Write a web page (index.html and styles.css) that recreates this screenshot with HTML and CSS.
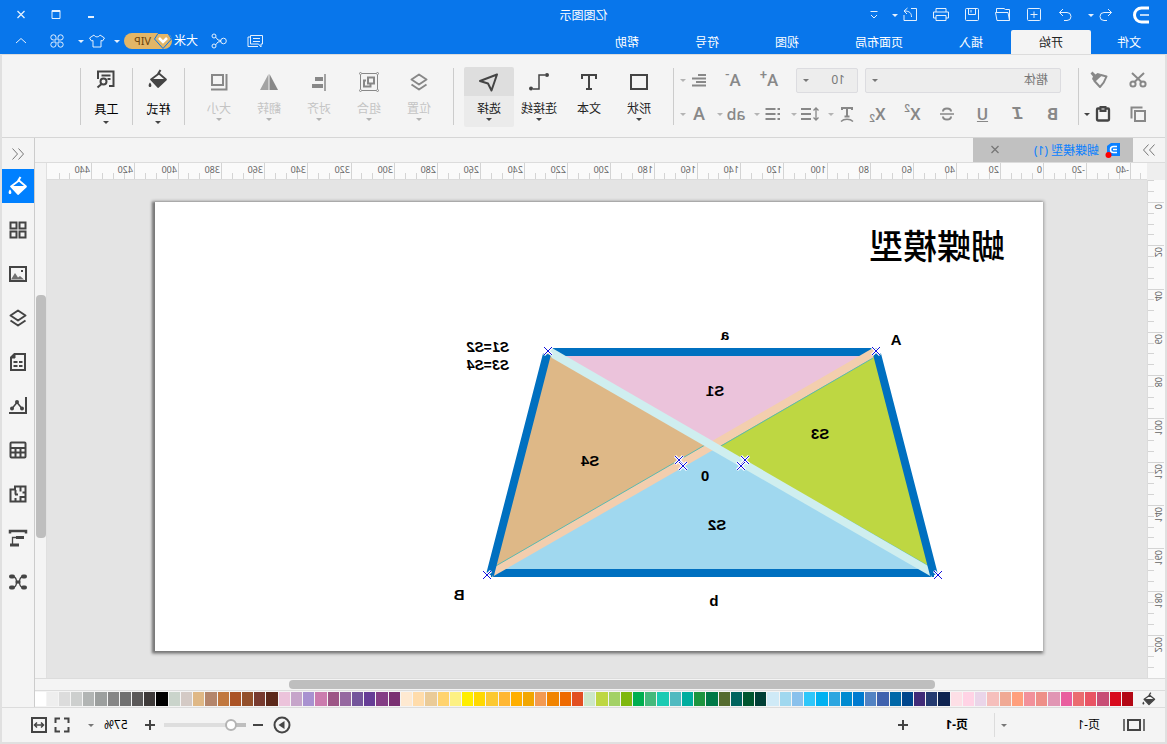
FILE: index.html
```html
<!DOCTYPE html>
<html lang="zh-CN">
<head>
<meta charset="utf-8">
<title>亿图图示</title>
<link rel="stylesheet" href="styles.css">
</head>
<body>
<svg class="sprite" aria-hidden="true">
  <symbol id="logo" viewBox="0 0 20 20"><path d="M2 3h7.500a7 7 0 0 1 0 14H2" fill="none" stroke="currentColor" stroke-width="3"/><path d="M2 10h9" fill="none" stroke="#b8d8fa" stroke-width="2"/></symbol>
  <symbol id="undo" viewBox="0 0 20 20"><path d="M8 4L4.500 7.500 8 11M4.500 7.500H12a3.700 3.700 0 0 1 0 8H9"/></symbol>
  <symbol id="redo" viewBox="0 0 20 20"><path d="M12 4l3.500 3.500L12 11M15.500 7.500H8a3.700 3.700 0 0 0 0 8h3"/></symbol>
  <symbol id="new" viewBox="0 0 20 20"><rect x="3.500" y="3.500" width="13" height="12" rx="1"/><path d="M10 6.500v6.500M6.500 9.500h7"/></symbol>
  <symbol id="open" viewBox="0 0 20 20"><path d="M3.500 15.500v-11h4l1.500-1h7.500v4M3.500 15.500l1.500-8h12.500l-1.500 8z"/></symbol>
  <symbol id="save" viewBox="0 0 20 20"><rect x="3.500" y="3.500" width="13" height="12" rx="1"/><path d="M6.500 3.500v6h7v-6M11 5v2.500"/></symbol>
  <symbol id="print" viewBox="0 0 20 20"><path d="M5 7V3.500h10V7M5 13H2.500V7h15v6H15M5 10.500h10v5H5z"/></symbol>
  <symbol id="export" viewBox="0 0 20 20"><path d="M9 3.500H3.500v12h12.500V10M8.500 12c0-4 2-6 7-6M12.500 3L16 6l-3 3"/></symbol>
  <symbol id="more" viewBox="0 0 20 20"><path d="M6.500 6.500h7M7 10l3 3 3-3"/></symbol>
  <symbol id="min" viewBox="0 0 20 20"><path d="M7 12h6" stroke-width="2"/></symbol>
  <symbol id="max" viewBox="0 0 20 20"><path d="M6 5.500h8v8H6zM6 6.500h8"/></symbol>
  <symbol id="close" viewBox="0 0 20 20"><path d="M6.500 6l7 7M13.500 6l-7 7" stroke-width="1.300"/></symbol>
  <symbol id="note" viewBox="0 0 20 20"><path d="M2.500 4.500h12v8.500h-8l-2.500 3V13h-1.500zM5 7.500h7M5 10.500h7M15 6h2v9.500H7"/></symbol>
  <symbol id="share" viewBox="0 0 20 20"><circle cx="5.500" cy="10" r="2.800"/><circle cx="15" cy="5" r="2"/><circle cx="15" cy="15" r="2"/><path d="M8 9.500l3-.5 2.500-3M8 10.500l3 .5 2.500 3"/></symbol>
  <symbol id="shirt" viewBox="0 0 20 20"><path d="M7 4L2.500 7l2 3L6 9.500V16h8V9.500l1.500.5 2-3L13 4c-1 2.500-5 2.500-6 0z"/></symbol>
  <symbol id="clover" viewBox="0 0 20 20"><path d="M9 9H6.500A2.600 2.600 0 1 1 9 6.500zM11 9h2.500A2.600 2.600 0 1 0 11 6.500zM9 11H6.500A2.600 2.600 0 1 0 9 13.500zM11 11h2.500A2.600 2.600 0 1 1 11 13.500z"/></symbol>
  <symbol id="up" viewBox="0 0 20 20"><path d="M5 12l5-4.500 5 4.500"/></symbol>
  <symbol id="left2" viewBox="0 0 20 20"><path d="M9.500 4.500L4.500 10l5 5.500M15.500 4.500L10.500 10l5 5.500"/></symbol>
  <symbol id="right2" viewBox="0 0 20 20"><path d="M4.500 4.500L9.500 10l-5 5.500M10.500 4.500L15.500 10l-5 5.500"/></symbol>
  <symbol id="cut" viewBox="0 0 20 20"><g stroke-width="2"><circle cx="5" cy="14" r="2.600"/><circle cx="15" cy="14" r="2.600"/><path d="M4 3l9.500 9M16 3l-9.500 9"/></g></symbol>
  <symbol id="painter" viewBox="0 0 20 20"><path d="M2.500 6.500L8 5l6.500 6L9 17c-2.500-2.500-5-6-6.500-10.500z" stroke-width="2" stroke-linejoin="round"/><path d="M8 4l3.500-1 2 1.500L16.500 1.500l2 2-2.500 3 1 2.500-2.500 3z" fill="currentColor" stroke="none"/></symbol>
  <symbol id="copy" viewBox="0 0 20 20"><path d="M3 7h10v10H3zM5.500 3.500h11v11" stroke-width="2"/></symbol>
  <symbol id="paste" viewBox="0 0 20 20"><rect x="4" y="4.500" width="12" height="12" rx="1" stroke-width="2.300"/><path d="M6.500 2h7v6h-7z" fill="currentColor" stroke="none"/><path d="M8.500 5h3" stroke="#f4f4f4"/></symbol>
  <symbol id="alignc" viewBox="0 0 20 20"><path d="M3 5h8M3 8.500h14M3 12h10M3 15.500h14" stroke-width="2"/></symbol>
  <symbol id="strike" viewBox="0 0 20 20"><path d="M14 7.500c0-4-8-4-8 0M6 12.500c0 4 8 4 8 0" stroke-width="2"/><path d="M3 10h14" stroke-width="1.500"/></symbol>
  <symbol id="textarc" viewBox="0 0 20 20"><path d="M5 6V4h10v2M10 4v9M7.500 12.500h5" stroke-width="2"/><path d="M4 17.500c3-3 9-3 12 0" stroke-width="1.500"/></symbol>
  <symbol id="lineh" viewBox="0 0 20 20"><path d="M4 4.500v11M1.500 6.500L4 4l2.500 2.500M1.500 13.500L4 16l2.500-2.500" stroke-width="1.300"/><path d="M9 5h10M9 10h10M9 15h10" stroke-width="2"/></symbol>
  <symbol id="list" viewBox="0 0 20 20"><path d="M3 5h2.500M7.500 5h10M3 10h2.500M7.500 10h10M3 15h2.500M7.500 15h10" stroke-width="2"/></symbol>
  <symbol id="shape" viewBox="0 0 20 20"><path d="M2 3h16v14H2z" stroke-width="2"/></symbol>
  <symbol id="text" viewBox="0 0 20 20"><path d="M3 7V3h14v4M10 3v14.500M7 17h6" stroke-width="2"/></symbol>
  <symbol id="conn" viewBox="0 0 20 20"><path d="M4 3h6v14h6" stroke-width="1.500"/><circle cx="2" cy="3" r="2" fill="currentColor" stroke="none"/><circle cx="18" cy="16.500" r="2" fill="currentColor" stroke="none"/></symbol>
  <symbol id="select" viewBox="0 0 20 20"><path d="M2 2.500l17 6.500-8 2.500-3.500 7z" stroke-width="2" stroke-linejoin="round"/></symbol>
  <symbol id="layers" viewBox="0 0 20 20"><path d="M10 2.500l7.500 5L10 12.500 2.500 7.500zM2.500 12.500L10 17.500l7.500-5" stroke-width="2" stroke-linejoin="round"/></symbol>
  <symbol id="group" viewBox="0 0 20 20"><path d="M1.500 1.500h17v17h-17z"/><path d="M5 5.500h6v6H5zM13 8.500h2v6H8.500v-2" stroke-width="2"/><path d="M0 0h3v3H0zM17 0h3v3h-3zM0 17h3v3H0zM17 17h3v3h-3z" fill="#f4f4f4" stroke="none"/><circle cx="1.500" cy="1.500" r="1"/><circle cx="18.500" cy="1.500" r="1"/><circle cx="1.500" cy="18.500" r="1"/><circle cx="18.500" cy="18.500" r="1"/></symbol>
  <symbol id="align" viewBox="0 0 20 20"><path d="M4 2v17" stroke-width="1.500"/><path d="M6 5h8v4H6zM6 12h11v4H6z" fill="currentColor" stroke="none"/></symbol>
  <symbol id="flip" viewBox="0 0 20 20"><path d="M9.500 2v16H1z" fill="currentColor" stroke="none"/><path d="M10.500 2v16H19z" fill="currentColor" stroke="none" opacity=".75"/></symbol>
  <symbol id="size" viewBox="0 0 20 20"><path d="M6 3h11v10H6zM2.500 2v15.500H18" stroke-width="2"/></symbol>
  <symbol id="bucket" viewBox="0 0 20 20"><path d="M9 4.500l8 6L10 18 2 10.500z" stroke-width="1.800" stroke-linejoin="round"/><path d="M2 10h15L10 18z" fill="currentColor" stroke="none"/><path d="M10 5L7.500 1" stroke-width="2"/><path d="M18 13.500c2.500 3 1 4.500 0 4.500s-2.500-1.500 0-4.500z" fill="currentColor" stroke="none"/></symbol>
  <symbol id="tools" viewBox="0 0 20 20"><path d="M7 17H2.500V2.500H18V10" stroke-width="2"/><path d="M5.500 6.500h9M5.500 10h3" stroke-width="1.800"/><circle cx="12.500" cy="12.500" r="3" stroke-width="2"/><path d="M14.500 15l4 3.500" stroke-width="2"/></symbol>
  <symbol id="grid" viewBox="0 0 20 20"><path d="M2.500 2.500h6v6h-6zM2.500 11.500h6v6h-6zM11.500 11.500h6v6h-6zM11.500 2.500h6v6h-6z" stroke-width="2"/></symbol>
  <symbol id="image" viewBox="0 0 20 20"><path d="M2 3h16v14H2z" stroke-width="2"/><path d="M4 15.500l4-3.500 2 1.500 3-4.500 4 6.500z" fill="currentColor" stroke="none" opacity=".75"/><path d="M5 6h2v2H5z" fill="currentColor" stroke="none"/></symbol>
  <symbol id="doc" viewBox="0 0 20 20"><path d="M3 2h10.500L17 5.500V18H3z" stroke-width="2"/><path d="M5.500 10H9M10.500 10h4M5.500 14H9M10.500 14h4" stroke-width="2"/><path d="M13 2v4h4z" fill="currentColor"/></symbol>
  <symbol id="chart" viewBox="0 0 20 20"><path d="M2 1v16h17" stroke-width="2"/><path d="M6 12.500l5-6 5 6" stroke-width="1.500"/><circle cx="6" cy="12.500" r="2" fill="currentColor" stroke="none"/><circle cx="11" cy="6" r="2" fill="currentColor" stroke="none"/><circle cx="16" cy="12.500" r="2" fill="currentColor" stroke="none"/></symbol>
  <symbol id="table" viewBox="0 0 20 20"><rect x="2.500" y="2.500" width="15" height="15" rx="1" stroke-width="2"/><path d="M2 8h16M2 12.500h16M7.500 8v10M12.500 8v10" stroke-width="2"/></symbol>
  <symbol id="plan" viewBox="0 0 20 20"><path d="M2.500 2.500H13v3h4.500v12h-15zM7.500 2.500v5M2.500 8.500h3M2.500 13h5v4.500M12.500 6v4.500M12.500 17v-3M10 10.500h3" stroke-width="2"/></symbol>
  <symbol id="gantt" viewBox="0 0 20 20"><path d="M2 5.500V3h16v2.500" stroke-width="2.500"/><path d="M4 9.500h8M9 17h9" stroke-width="3"/><path d="M12 9.500h3.500V16" stroke-width="1.300"/></symbol>
  <symbol id="mind" viewBox="0 0 20 20"><path d="M4 4.500c6 0 3 5.500 6 5.500s0-5.500 6-5.500M4 15.500c6 0 3-5.500 6-5.500s0 5.500 6 5.500" stroke-width="1.300"/><path d="M3 4.500h2M15 4.500h2M3 15.500h2M15 15.500h2" stroke-width="4" stroke-linecap="round"/><path d="M7.500 10h5" stroke-width="3"/></symbol>
  <symbol id="pageview" viewBox="0 0 24 20"><path d="M6 5h12v10H6z" stroke-width="2"/><path d="M2 4v12M22 4v12" stroke-width="1.500"/></symbol>
  <symbol id="plus" viewBox="0 0 20 20"><path d="M10 5v10M5 10h10" stroke-width="2"/></symbol>
  <symbol id="minus" viewBox="0 0 20 20"><path d="M5 10h10" stroke-width="2"/></symbol>
  <symbol id="play" viewBox="0 0 20 20"><circle cx="10" cy="10" r="7.500" stroke-width="2"/><path d="M7.500 6l6 4-6 4z" fill="currentColor" stroke="none"/></symbol>
  <symbol id="full" viewBox="0 0 20 20"><path d="M3.500 8V3.500H8M12 3.500h4.500V8M16.500 12v4.500H12M8 16.500H3.500V12" stroke-width="2"/></symbol>
  <symbol id="fit" viewBox="0 0 20 20"><path d="M3 3h14v14H3z" stroke-width="2"/><path d="M6 10h8M8 7.500L5.500 10 8 12.500M12 7.500l2.500 2.500L12 12.500" stroke-width="1.500"/></symbol>
</svg>

<div class="app">
  <header class="titlebar">
    <div class="title-row">
      <nav class="quick">
        <svg class="icon brand"><use href="#logo"/></svg>
        <button class="q" aria-label="撤销"><svg class="icon"><use href="#undo"/></svg><i class="caret"></i></button>
        <button class="q" aria-label="重做"><svg class="icon"><use href="#redo"/></svg></button>
        <button class="q" aria-label="新建"><svg class="icon"><use href="#new"/></svg></button>
        <button class="q" aria-label="打开"><svg class="icon"><use href="#open"/></svg></button>
        <button class="q" aria-label="保存"><svg class="icon"><use href="#save"/></svg></button>
        <button class="q" aria-label="打印"><svg class="icon"><use href="#print"/></svg></button>
        <button class="q export" aria-label="导出"><svg class="icon"><use href="#export"/></svg><i class="caret"></i></button>
        <button class="q" aria-label="更多"><svg class="icon"><use href="#more"/></svg></button>
      </nav>
      <h1 class="app-title">亿图图示</h1>
      <div class="window-buttons">
        <button aria-label="最小化"><svg class="icon"><use href="#min"/></svg></button>
        <button aria-label="最大化"><svg class="icon"><use href="#max"/></svg></button>
        <button aria-label="关闭"><svg class="icon"><use href="#close"/></svg></button>
      </div>
    </div>
    <div class="menu-row">
      <nav class="menu">
        <button class="menu-tab first">文件</button>
        <button class="menu-tab active">开始</button>
        <button class="menu-tab">插入</button>
        <button class="menu-tab">页面布局</button>
        <button class="menu-tab">视图</button>
        <button class="menu-tab">符号</button>
        <button class="menu-tab">帮助</button>
      </nav>
      <div class="account">
        <button class="acc note" aria-label="评论"><svg class="icon"><use href="#note"/></svg></button>
        <button class="acc share" aria-label="分享"><svg class="icon"><use href="#share"/></svg></button>
        <span class="user">大米</span>
        <button class="vip"><svg class="gem" viewBox="0 0 18 16"><path d="M4 .5h10l3.500 5.500L9 15.500.5 6z" fill="#e3b667" stroke="#0876eb"/><path d="M5 5l4 4 4-4" fill="none" stroke="#fff" stroke-width="2.500"/></svg>VIP</button>
        <i class="caret"></i>
        <button class="acc skin" aria-label="皮肤"><svg class="icon"><use href="#shirt"/></svg></button>
        <i class="caret"></i>
        <button class="acc" aria-label="应用"><svg class="icon"><use href="#clover"/></svg></button>
        <button class="acc" aria-label="收起"><svg class="icon"><use href="#up"/></svg></button>
      </div>
    </div>
  </header>

  <div class="frame">
    <section class="ribbon">
      <div class="clip">
        <button aria-label="剪切"><svg class="icon"><use href="#cut"/></svg></button>
        <button aria-label="格式刷"><svg class="icon"><use href="#painter"/></svg></button>
        <button aria-label="复制"><svg class="icon"><use href="#copy"/></svg></button>
        <button class="dark" aria-label="粘贴"><svg class="icon"><use href="#paste"/></svg><i class="caret"></i></button>
      </div>
      <span class="rule"></span>
      <div class="font">
        <div class="font-row fields">
          <label class="combo family"><select aria-label="字体"><option>楷体</option></select><i class="caret"></i></label>
          <label class="combo points"><select aria-label="字号"><option>10</option></select><i class="caret"></i></label>
          <button class="f big" aria-label="增大字号">A<sup>+</sup></button>
          <button class="f big" aria-label="减小字号">A<sup>-</sup></button>
          <button class="split" aria-label="对齐方式"><svg class="icon"><use href="#alignc"/></svg><i class="caret"></i></button>
        </div>
        <div class="font-row">
          <button class="f"><b>B</b></button>
          <button class="f italic">I</button>
          <button class="f"><u>U</u></button>
          <button class="f" aria-label="删除线"><svg class="icon"><use href="#strike"/></svg></button>
          <button class="f">X<sup>2</sup></button>
          <button class="f">X<sub>2</sub></button>
          <button class="split" aria-label="文字效果"><svg class="icon"><use href="#textarc"/></svg><i class="caret"></i></button>
          <button class="split" aria-label="行距"><svg class="icon"><use href="#lineh"/></svg><i class="caret"></i></button>
          <button class="split" aria-label="列表"><svg class="icon"><use href="#list"/></svg><i class="caret"></i></button>
          <button class="split"><span>ab</span><i class="caret"></i></button>
          <button class="split letter"><span>A</span><i class="caret"></i></button>
        </div>
      </div>
      <span class="rule"></span>
      <div class="commands">
        <button class="cmd"><svg class="icon"><use href="#shape"/></svg><span>形状</span><i class="caret"></i></button>
        <button class="cmd"><svg class="icon"><use href="#text"/></svg><span>文本</span></button>
        <button class="cmd"><svg class="icon"><use href="#conn"/></svg><span>连接线</span><i class="caret"></i></button>
        <button class="cmd on"><svg class="icon"><use href="#select"/></svg><span>选择</span><i class="caret"></i></button>
      </div>
      <span class="rule"></span>
      <div class="commands arrange">
        <button class="cmd" disabled><svg class="icon"><use href="#layers"/></svg><span>位置</span><i class="caret"></i></button>
        <button class="cmd" disabled><svg class="icon"><use href="#group"/></svg><span>组合</span><i class="caret"></i></button>
        <button class="cmd" disabled><svg class="icon"><use href="#align"/></svg><span>对齐</span><i class="caret"></i></button>
        <button class="cmd" disabled><svg class="icon"><use href="#flip"/></svg><span>翻转</span><i class="caret"></i></button>
        <button class="cmd" disabled><svg class="icon"><use href="#size"/></svg><span>大小</span><i class="caret"></i></button>
      </div>
      <span class="rule"></span>
      <button class="cmd tool"><svg class="icon"><use href="#bucket"/></svg><span>样式</span><i class="caret"></i></button>
      <span class="rule"></span>
      <button class="cmd tool"><svg class="icon"><use href="#tools"/></svg><span>工具</span><i class="caret"></i></button>
      <span class="rule"></span>
    </section>

    <div class="middle">
      <div class="workspace">
        <div class="doc-tabs">
          <button class="collapse" aria-label="展开"><svg class="icon"><use href="#right2"/></svg></button>
          <div class="doc-tab">
            <svg class="file-icon" viewBox="0 0 16 16"><path d="M1 1h9l4 3v10H1z" fill="#0a80ff"/><path d="M4 4.500h3.500a3 3 0 0 1 0 6H4M4 7.500h4" fill="none" stroke="#fff" stroke-width="1.500"/><circle cx="12.500" cy="13" r="3" fill="#f00"/></svg>
            <span class="doc-name">蝴蝶模型 (1)</span>
            <button class="doc-close" aria-label="关闭标签"><svg class="icon"><use href="#close"/></svg></button>
          </div>
        </div>
        <div class="board">
          <div class="corner"></div>
          <svg class="ruler ruler-h" id="ruler-h"></svg>
          <div class="v-scroll"><span class="v-thumb"></span></div>
          <svg class="ruler ruler-v" id="ruler-v"></svg>
          <main class="canvas">
            <svg class="page" viewBox="0 0 888 449">
              <text x="38" y="57" class="heading">蝴蝶模型</text>
              <path d="M166 150H496L331 243z" fill="#ebc3db"/>
              <path d="M166 150L331 243 107 371z" fill="#bed742"/>
              <path d="M496 150L331 243 554 371z" fill="#deb887"/>
              <path d="M331 243L554 371H107z" fill="#a0d8ef"/>
              <path d="M166 150H493M109 371H552" class="edge"/>
              <path d="M165 147L170 146 549 365 551 375 170 156z" fill="#f3ceae"/>
              <path d="M170 156L322 244M338 243L549 365M200 315L113 365" class="hair"/>
              <path d="M497 147L491 146 113 365 111 375 491 156z" fill="#cfeeef"/>
              <path d="M166 152L109 373M496 152L553 373" class="edge"/>
              <g id="marks"></g>
              <g class="labels">
                <text x="147" y="143">A</text><text x="318" y="138">a</text>
                <text x="328" y="194">S1</text><text x="223" y="237">S3</text>
                <text x="453" y="264">S4</text><text x="338" y="279">0</text>
                <text x="326" y="328">S2</text><text x="584" y="398">B</text>
                <text x="329" y="404">b</text>
                <text x="555" y="150" class="eq">S1=S2</text><text x="555" y="168" class="eq">S3=S4</text>
              </g>
            </svg>
          </main>
          <div class="v-scroll"></div>
        </div>
        <div class="h-scroll"><span class="h-thumb"></span></div>
        <div class="palette">
          <svg class="icon fill"><use href="#bucket"/></svg>
          <div class="swatches" id="swatches"></div>
        </div>
      </div>
      <aside class="sidebar">
        <button class="side-head" aria-label="收起"><svg class="icon"><use href="#left2"/></svg></button>
        <button class="side active" aria-label="填充"><svg class="icon"><use href="#bucket"/></svg></button>
        <button class="side" aria-label="布局"><svg class="icon"><use href="#grid"/></svg></button>
        <button class="side" aria-label="图片"><svg class="icon"><use href="#image"/></svg></button>
        <button class="side" aria-label="图层"><svg class="icon"><use href="#layers"/></svg></button>
        <button class="side" aria-label="备注"><svg class="icon"><use href="#doc"/></svg></button>
        <button class="side" aria-label="图表"><svg class="icon"><use href="#chart"/></svg></button>
        <button class="side" aria-label="表格"><svg class="icon"><use href="#table"/></svg></button>
        <button class="side" aria-label="平面图"><svg class="icon"><use href="#plan"/></svg></button>
        <button class="side" aria-label="甘特图"><svg class="icon"><use href="#gantt"/></svg></button>
        <button class="side" aria-label="思维导图"><svg class="icon"><use href="#mind"/></svg></button>
      </aside>
    </div>

    <footer class="status">
      <svg class="icon wide"><use href="#pageview"/></svg>
      <button class="page-pick"><span>页-1</span><i class="caret"></i></button>
      <span class="bar"></span>
      <button class="page-tab">页-1</button>
      <button class="add" aria-label="新建页"><svg class="icon"><use href="#plus"/></svg></button>
      <div class="zoom">
        <button aria-label="演示"><svg class="icon"><use href="#play"/></svg></button>
        <button class="step" aria-label="缩小"><svg class="icon"><use href="#minus"/></svg></button>
        <input type="range" class="slider" aria-label="缩放" min="0" max="100" value="12">
        <button class="step" aria-label="放大"><svg class="icon"><use href="#plus"/></svg></button>
        <button class="percent"><span>57%</span><i class="caret"></i></button>
        <button class="view" aria-label="全屏"><svg class="icon"><use href="#full"/></svg></button>
        <button class="view" aria-label="适应宽度"><svg class="icon"><use href="#fit"/></svg></button>
      </div>
    </footer>
  </div>
</div>
<script src="script.js"></script>
</body>
</html>
```
FILE: styles.css
```css
* { box-sizing: border-box; }
body {
  margin: 0;
  overflow: hidden;
  font: 12px/16px "Noto Sans", "Noto Sans CJK SC", sans-serif;
  color: #222;
}
button {
  margin: 0;
  padding: 0;
  border: 0;
  background: none;
  font: inherit;
  color: inherit;
  display: flex;
  align-items: center;
  justify-content: center;
}
.sprite { display: none; }
.icon {
  width: 20px;
  height: 20px;
  flex: none;
  fill: none;
  stroke: currentColor;
}
.caret {
  flex: none;
  border: 3px solid transparent;
  border-top-color: currentColor;
  border-bottom: 0;
}

/* The whole window is shown as seen in a mirror. */
.app {
  height: 100vh;
  display: flex;
  flex-direction: column;
  transform: scaleX(-1);
}

/* Title bar */
.titlebar { background: #0876eb; color: #e4f0fd; }
.title-row {
  height: 30px;
  display: grid;
  grid-template-columns: 1fr auto 1fr;
  align-items: center;
}
.quick { display: flex; align-items: center; padding-left: 16px; }
.brand { color: #fff; margin-right: 15px; }
.q { margin-right: 11px; }
.q .caret { margin: 0 2px; }
.q.export { margin-right: 6px; }
.app-title { margin: 0; padding-top: 2px; font-size: 12px; font-weight: 400; color: #fff; }
.window-buttons {
  display: flex;
  justify-content: flex-end;
  gap: 15px;
  padding-right: 11px;
}
.menu-row { display: flex; justify-content: space-between; }
.menu { display: flex; }
.menu-tab { height: 24px; padding: 2px 28px 0; color: #fff; }
.menu-tab.first { padding: 2px 26px 0; }
.menu-tab.active {
  background: #f4f4f4;
  color: #222;
  border-radius: 2px 2px 0 0;
}
.account {
  display: flex;
  align-items: center;
  height: 22px;
  padding-right: 11px;
}
.acc { margin-right: 16px; }
.acc.share { margin-right: 11px; }
.acc:last-child { margin-right: 0; }
.account .skin { margin: 0 0 0 7px; }
.skin + .caret { margin: 0 11px 0 3px; }
.user { color: #fff; }
.vip {
  width: 48px;
  height: 16px;
  margin: 0 4px 0 2px;
  gap: 3px;
  justify-content: flex-start;
  border-radius: 8px;
  background: #e3b667;
  color: #6b4410;
  font-size: 11px;
  line-height: 16px;
}
.gem { flex: none; width: 18px; height: 16px; }

.frame {
  flex: 1;
  min-height: 0;
  display: flex;
  flex-direction: column;
  border: solid #e0e0e0;
  border-width: 0 2px 2px;
  background: #f4f4f4;
}

/* Ribbon */
.ribbon {
  height: 84px;
  display: flex;
  border-top: 1px solid #dcdcdc;
  border-bottom: 1px solid #d6d6d6;
  color: #888;
}
.rule {
  width: 1px;
  height: 57px;
  margin-top: 13px;
  background: #ccc;
}
.clip {
  display: grid;
  grid-template-columns: 34px 40px;
  grid-template-rows: 28px 28px;
  gap: 6px 2px;
  padding: 11px 0 0 10px;
}
.clip button { gap: 3px; }
.dark { color: #444; }
.font { padding: 11px 0 0 8px; width: 404px; }
.font-row { display: flex; align-items: center; height: 28px; margin-bottom: 6px; }
.fields { padding-left: 9px; }
.combo {
  display: flex;
  align-items: center;
  height: 25px;
  margin-right: 7px;
  padding-right: 6px;
  border: 1px solid #dcdce0;
  border-radius: 2px;
  background: #ededed;
  color: #777;
}
.combo select {
  flex: 1;
  min-width: 0;
  appearance: none;
  border: 0;
  padding: 0 0 0 12px;
  background: none;
  font: inherit;
  color: inherit;
}
.family { width: 196px; }
.points { width: 62px; margin-right: 9px; }
.f { width: 35px; height: 28px; font: 500 17px/20px Roboto, sans-serif; }
.f.big { width: 36px; }
.f.italic { font: italic bold 18px/20px "Liberation Mono", monospace; }
.f sup, .f sub { font-size: 10px; line-height: 10px; }
.f.big sup { font-size: 13px; }
.f sup { align-self: flex-start; margin-top: 4px; }
.f sub { align-self: flex-end; margin-bottom: 4px; }
.f b { font-weight: 700; }
.fields .split { margin-left: 3px; }
.split {
  width: 37px;
  height: 28px;
  gap: 3px;
  justify-content: flex-start;
  padding-left: 3px;
  font: 500 16px/20px "Noto Sans", sans-serif;
}
.split.letter { font: 500 18px/20px Roboto, sans-serif; }
.split > span { width: 20px; text-align: center; }
.split .caret, .cmd:disabled .caret { color: #b4b4b4; }
.commands { display: flex; padding: 0 10px 0 9px; }
.arrange { padding-right: 9px; }
.cmd {
  width: 50px;
  height: 60px;
  margin-top: 12px;
  flex-direction: column;
  justify-content: flex-start;
  color: #444;
  border-radius: 2px;
}
.cmd .icon { margin: 5px 0 4px; }
.cmd span { line-height: 20px; padding-top: 3px; height: 22px; color: #222; white-space: nowrap; }
.cmd:disabled { color: #888; }
.cmd:disabled span { color: #c4c4c4; }
.cmd.on { background: linear-gradient(#dedede 29px, #ebebeb 29px); }
.cmd.tool { width: 51px; }
.cmd.tool .icon { margin: 2px 0; }
.cmd.tool span { padding-top: 9px; height: 30px; color: #000; }

/* Middle */
.middle { flex: 1; min-height: 0; display: flex; }
.workspace { flex: 1; min-width: 0; display: flex; flex-direction: column; }
.doc-tabs { height: 25px; display: flex; border-bottom: 1px solid #dcdcdc; }
.collapse { width: 32px; color: #777; }
.doc-tab {
  width: 160px;
  display: flex;
  align-items: center;
  padding: 0 12px;
  background: #c1c1c1;
}
.file-icon { width: 16px; height: 16px; }
.doc-name { flex: 1; padding: 2px 0 0 6px; color: #0a80ff; white-space: nowrap; }
.doc-close { color: #777; }
.board {
  flex: 1;
  min-height: 0;
  display: grid;
  grid-template-columns: 18px 1fr 12px;
  grid-template-rows: 17px 1fr;
}
.corner { background: #eee; }
.ruler { display: block; width: 100%; height: 100%; background: #fafafa; }
.ruler path { stroke: #d4d4d4; fill: none; shape-rendering: crispEdges; }
.ruler text { font: 9px "Noto Sans", sans-serif; fill: #666; }
.ruler-h { border-bottom: 1px solid #dcdcdc; }
.ruler-v { border-right: 1px solid #dcdcdc; }
.canvas { overflow: hidden; background: #e4e4e4; padding: 22px 0 0 104px; min-width: 0; min-height: 0; }
.page {
  display: block;
  width: 888px;
  height: 449px;
  background: #fff;
  box-shadow: 1px 1px 3px 2px rgba(0, 0, 0, .3), 2px 1px 2px 1px rgba(0, 0, 0, .25);
}
.v-scroll { border-left: 1px solid #e0e0e0; position: relative; }
.v-thumb {
  position: absolute;
  top: 132px;
  left: 0;
  width: 10px;
  height: 243px;
  border-radius: 4px;
  background: #bebebe;
}
.heading { font: 500 34px "KaiTi", "Noto Sans CJK SC", sans-serif; fill: #000; }
.edge { fill: none; stroke: #0070c0; stroke-width: 8; }
.hair { fill: none; stroke: #5ab8b0; }
.labels { font: bold 15px "Liberation Sans", sans-serif; text-anchor: middle; }
.labels .eq { font-size: 14px; font-style: italic; }
.halo { stroke: #fff; stroke-width: 3; }
.cross { stroke: #11d; stroke-width: 1; }
.h-scroll {
  height: 13px;
  display: flex;
  border-top: 1px solid #dcdcdc;
  border-bottom: 1px solid #dcdcdc;
  padding: 1px 254px 1px 230px;
}
.h-thumb { flex: 1; border-radius: 4px; background: #bebebe; }
.palette { height: 16px; display: flex; align-items: center; }
.fill { width: 14px; height: 14px; margin: 0 9px; color: #444; }
.swatches { flex: 1; display: flex; gap: 1px; height: 14px; }
.swatch { flex: 1; }

/* Sidebar */
.sidebar { width: 33px; border-left: 1px solid #ccc; color: #444; }
.side, .side-head { width: 100%; }
.side-head { height: 31px; color: #777; }
.side { height: 34px; margin-bottom: 10px; }
.side.active { background: #0080ff; color: #fff; }

/* Status bar */
.status {
  height: 35px;
  display: flex;
  align-items: center;
  border-top: 1px solid #dcdcdc;
  color: #444;
}
.wide { width: 24px; margin: 0 22px 0 19px; }
.page-pick { width: 99px; justify-content: space-between; color: #000; }
.page-pick .caret, .percent .caret { color: #777; }
.bar { width: 1px; height: 24px; margin: 0 26px 0 6px; background: #dcdcdc; }
.page-tab { font-weight: 700; color: #000; }
.add { margin-left: 32px; }
.zoom { margin-left: auto; display: flex; align-items: center; padding-right: 27px; }
.step { margin: 0 2px 0 4px; }
.slider {
  appearance: none;
  width: 82px;
  height: 12px;
  margin: 0;
  background: linear-gradient(to right, #bebebe 14px, #dedede 14px) center / 100% 4px no-repeat;
}
.slider::-webkit-slider-thumb {
  appearance: none;
  width: 12px;
  height: 12px;
  border: 2px solid #b4b4b4;
  border-radius: 50%;
  background: #fff;
}
.percent { gap: 10px; margin: 0 16px 0 10px; color: #000; }
.view + .view { margin-left: 3px; }
```
FILE: script.js
```js
const NS = 'http://www.w3.org/2000/svg';
const add = (parent, name, attrs, text) => {
  const el = document.createElementNS(NS, name);
  for (const key in attrs) el.setAttribute(key, attrs[key]);
  if (text !== undefined) el.textContent = text;
  parent.appendChild(el);
};

const STEP = 43.27;
const drawRuler = (id, origin, from, to, vertical) => {
  const ruler = document.getElementById(id);
  let d = '';
  for (let q = from * 4 - 2; q <= to * 4 + 3; q++) {
    const p = Math.round(origin + q * STEP / 4) + 0.5;
    const len = q % 4 === 0 ? 17 : 7;
    d += vertical ? `M${18 - len} ${p}H18` : `M${p} ${17 - len}V17`;
  }
  add(ruler, 'path', { d });
  for (let n = from; n <= to; n++) {
    const p = Math.round(origin + n * STEP);
    if (vertical) {
      add(ruler, 'text', { transform: `translate(10 ${p + 2}) rotate(-90)`, 'text-anchor': 'end' }, n * 20);
    } else {
      add(ruler, 'text', { x: p + 2, y: 10 }, n * 20);
    }
  }
};
drawRuler('ruler-h', 103, -2, 22, false);
drawRuler('ruler-v', 22, 0, 10, true);

const marks = document.getElementById('marks');
[[495, 149], [167, 149], [556, 373], [105, 373], [364, 258], [360, 264], [298, 258], [302, 264]].forEach(([x, y]) => {
  const d = `M${x - 4} ${y - 4}l8 8M${x + 4} ${y - 4}l-8 8`;
  add(marks, 'path', { d, class: 'halo' });
  add(marks, 'path', { d, class: 'cross' });
});

const colors = `b30714 d80a1d c84e76 e95464 eb6c70 e95e9f e196b4 ee8f88 f2919b ff9f7c f0a994 f6bfbc ead5e9 ffd3e5 fddfe6
0e2350 243a70 412b78 00478d 0068a8 4062ae 5383c3 007bd0 008bd0 2ca6e0 00b1f1 2fc7fa 8ac1ec a0d8ef cfeaf7
003f36 00562f 00645e 556b2f 007947 1d953f 00ad9e 50bac0 1bcbb3 45b97c 00af50 7fb80e a3d166 bed742 cde7c8
e24f21 ee6a00 f18400 f39a52 f2a702 ffaf00 ffb733 fcc931 ffd900 ffee00 fdf184 ffd36e eacb98 ffdcab fee9d1
7a3072 843d85 663d96 74559b 9668a0 9d5686 cb7cae a992d0 c6a5ca ecc3db 5c281a 783a2f 934f2a ab5325 c1783f
b4866c dfb886 d4cac5 cad4cb 000000 3e3a39 5a5858 707070 868686 9c9f9e b2b5b4 cdcfce dcdcdc eeeeee ffffff`.split(/\s+/);
const swatches = document.getElementById('swatches');
colors.forEach((color) => {
  const el = document.createElement('span');
  el.className = 'swatch';
  el.style.background = '#' + color;
  swatches.appendChild(el);
});
```
